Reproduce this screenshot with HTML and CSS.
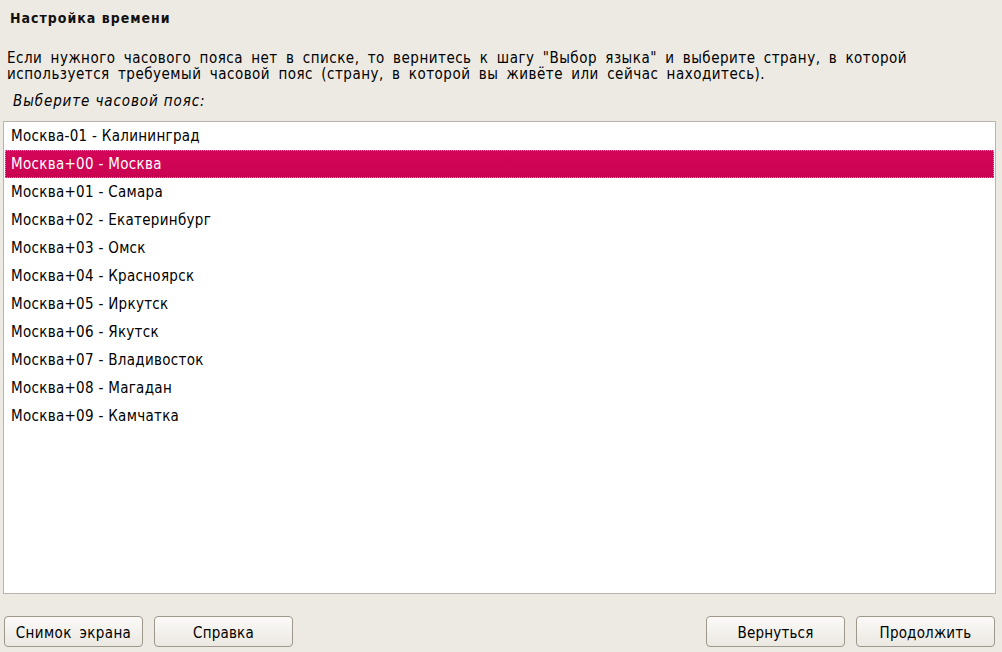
FILE: index.html
```html
<!DOCTYPE html>
<html lang="ru">
<head>
<meta charset="utf-8">
<link rel="stylesheet" href="styles.css">
<title>Настройка времени</title>
</head>
<body>
<div class="app">
  <h1 class="title">Настройка времени</h1>
  <p class="desc">Если нужного часового пояса нет в списке, то вернитесь к шагу "Выбор языка" и выберите страну, в которой<br>используется требуемый часовой пояс (страну, в которой вы живёте или сейчас находитесь).</p>
  <p class="prompt">Выберите часовой пояс:</p>
  <ul class="list">
    <li class="row">Москва-01 - Калининград</li>
    <li class="row selected">Москва+00 - Москва</li>
    <li class="row">Москва+01 - Самара</li>
    <li class="row">Москва+02 - Екатеринбург</li>
    <li class="row">Москва+03 - Омск</li>
    <li class="row">Москва+04 - Красноярск</li>
    <li class="row">Москва+05 - Иркутск</li>
    <li class="row">Москва+06 - Якутск</li>
    <li class="row">Москва+07 - Владивосток</li>
    <li class="row">Москва+08 - Магадан</li>
    <li class="row">Москва+09 - Камчатка</li>
  </ul>
  <div class="buttons">
    <div class="group">
      <button class="btn btn-wide">Снимок экрана</button>
      <button class="btn">Справка</button>
    </div>
    <div class="group">
      <button class="btn">Вернуться</button>
      <button class="btn">Продолжить</button>
    </div>
  </div>
</div>
</body>
</html>
```
FILE: styles.css
```css
* { box-sizing: border-box; }
html, body { margin: 0; padding: 0; }
body {
  background: #edeae4;
  font-family: "DejaVu Sans Condensed", "DejaVu Sans", sans-serif;
  font-stretch: condensed;
  font-size: 15px;
  color: #000;
  width: 1002px;
  height: 652px;
  overflow: hidden;
}
.app {
  display: flex;
  flex-direction: column;
  height: 652px;
  padding: 0 6px 0 3px;
}
.title {
  margin: 10px 0 0 7px;
  font-size: 14px;
  font-weight: bold;
  letter-spacing: 1px;
  line-height: 16px;
  color: #111;
}
.desc {
  margin: 24px 0 0 4px;
  line-height: 16px;
  letter-spacing: 0.5px;
  word-spacing: 3.5px;
}
.prompt {
  margin: 11px 0 0 10px;
  font-style: italic;
  line-height: 16px;
  letter-spacing: 0.9px;
}
.list {
  list-style: none;
  margin: 12px 0 0 0;
  padding: 0 1px;
  background: #fff;
  border: 1px solid #b9b4aa;
  height: 473px;
  flex: none;
}
.row {
  height: 28px;
  line-height: 29px;
  padding-left: 6px;
  letter-spacing: 0.3px;
}
.row.selected {
  background: linear-gradient(#d6065a, #c90350);
  color: #fff;
  outline: 1px dotted #f08ab0;
  outline-offset: -1px;
}
.buttons {
  display: flex;
  justify-content: space-between;
  margin: 22px 1px 0 1px;
}
.group {
  display: flex;
  gap: 11px;
}
.btn {
  width: 139px;
  height: 31px;
  font-family: "DejaVu Sans Condensed", "DejaVu Sans", sans-serif;
  font-stretch: condensed;
  font-size: 15px;
  letter-spacing: 0.2px;
  line-height: 31px;
  color: #000;
  background: linear-gradient(#fbfaf8, #ebe8e2);
  border: 1px solid #9e988c;
  border-radius: 4px;
  padding: 1px 0 0 0;
}
.btn-wide {
  letter-spacing: 0.4px;
  word-spacing: 3px;
}
```
